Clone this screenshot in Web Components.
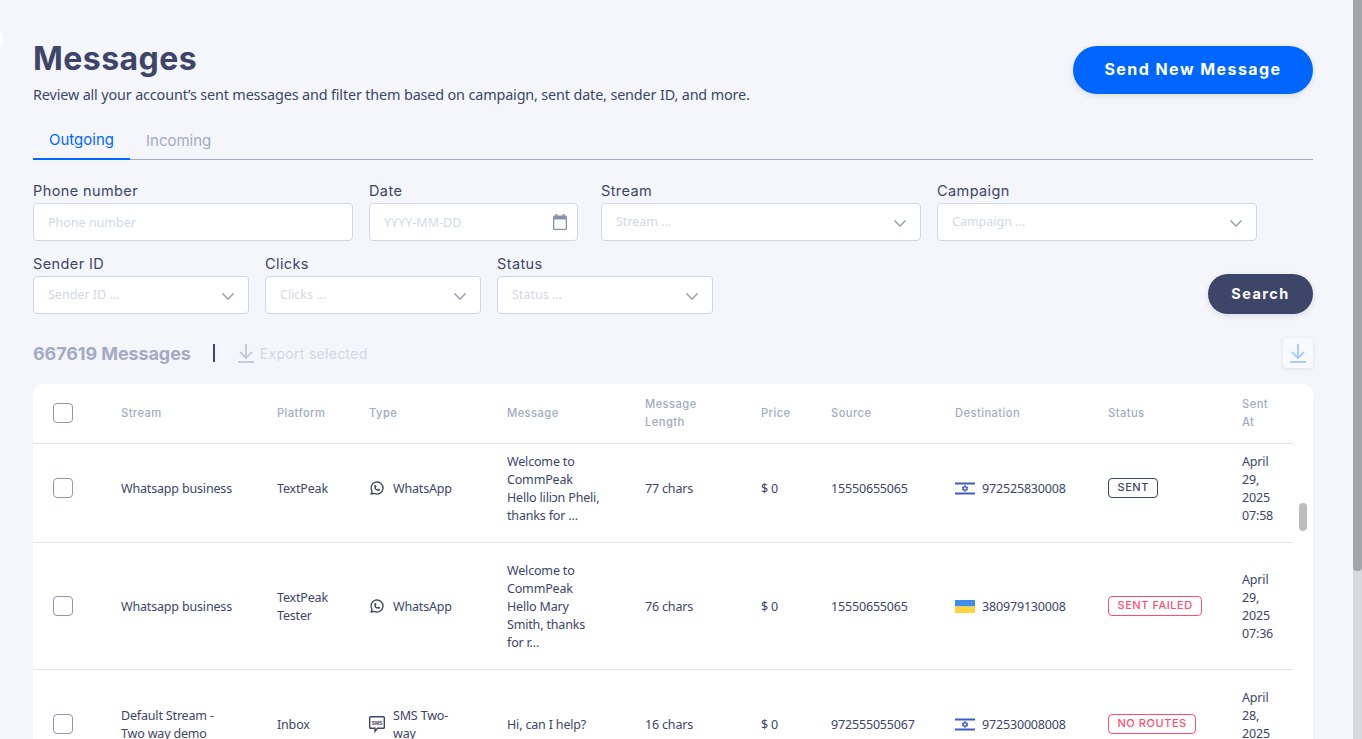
<!DOCTYPE html>
<html lang="en">
<head>
<meta charset="utf-8">
<title>Messages</title>
<style>
  html, body { margin: 0; height: 100%; overflow: hidden; }
  body { background: #f4f6fb; color: #3d4569; font-family: "Noto Sans", sans-serif; }
</style>
</head>
<body>
<messages-page></messages-page>

<script>
const HEAD_FONT = `Inter, "Noto Sans", sans-serif`;
const CHEVRON = `<svg class="chev" width="12" height="7" viewBox="0 0 12 7" fill="none" stroke="#8f97b3" stroke-width="1.3"><path d="M.5.500l5.500 5.500 5.500-5.500"/></svg>`;
const DOWNLOAD = `<svg width="16" height="19" viewBox="0 0 16 19" fill="none" stroke="currentColor" stroke-width="2"><path d="M8 0v13.500M2 8l6 6 6-6M0 18h16"/></svg>`;

class PillButton extends HTMLElement {
  constructor() {
    super();
    this.attachShadow({ mode: 'open' }).innerHTML = `
    <style>
      :host{
        display: inline-flex;
        align-items: center;
        justify-content: center;
        box-sizing: border-box;
        height: var(--h, 48px);
        width: var(--w, 240px);
        padding-bottom: 2px;
        border-radius: 24px;
        background: var(--bg, #0066ff);
        color: #fff;
        font-family: ${HEAD_FONT};
        font-weight: 700;
        font-size: var(--fs, 16px);
        letter-spacing: 1.45px;
        box-shadow: 0 2px 6px rgba(61,69,105,.14);
      }
    </style>
    <slot></slot>`;
  }
}
customElements.define('pill-button', PillButton);

class PageHeader extends HTMLElement {
  constructor() {
    super();
    this.attachShadow({ mode: 'open' }).innerHTML = `
    <style>
      :host{
        display: flex;
        justify-content: space-between;
        height: 120px;
        padding-top: 39px;
        box-sizing: border-box;
      }
      h1{
        margin: 0;
        font-family: ${HEAD_FONT};
        font-weight: 700;
        font-size: 32px;
        line-height: 40px;
        letter-spacing: .45px;
        color: #3d4569;
      }
      p{
        margin: 6px 0 0;
        font-size: 14.4px;
        letter-spacing: -.15px;
        line-height: 20px;
        color: #3d4569;
      }
      .action{ margin-top: 7px; }
    </style>
    <div>
      <h1>Messages</h1>
      <p>Review all your account’s sent messages and filter them based on campaign, sent date, sender ID, and more.</p>
    </div>
    <div class="action"><pill-button>Send New Message</pill-button></div>`;
  }
}
customElements.define('page-header', PageHeader);

class TabBar extends HTMLElement {
  constructor() {
    super();
    this.attachShadow({ mode: 'open' }).innerHTML = `
    <style>
      :host{
        display: flex;
        height: 39px;
        border-bottom: 1px solid #a3abc4;
        font-family: ${HEAD_FONT};
        font-size: 15px;
      }
      div{
        box-sizing: border-box;
        height: 40px;
        line-height: 20px;
      }
      .on{
        width: 97px;
        padding: 10px 0 0 16px;
        color: #0066ff;
        border-bottom: 2px solid #0066ff;
      }
      .off{
        padding: 11px 0 0 16px;
        color: #a3abc4;
      }
    </style>
    <div class="on">Outgoing</div>
    <div class="off">Incoming</div>`;
  }
}
customElements.define('tab-bar', TabBar);

class FilterField extends HTMLElement {
  constructor() {
    super();
    this.shadowDOM = this.attachShadow({ mode: 'open' });
  }

  connectedCallback() {
    const kind = this.getAttribute('kind');
    let icon = '';
    if (kind === 'select') icon = CHEVRON;
    if (kind === 'date') {
      icon = `<svg class="cal" width="14" height="16" viewBox="0 0 14 16"><path d="M2.500 0h2v1.500h5V0h2v1.500h1.200A1.300 1.300 0 0 1 14 2.800v11.900a1.300 1.300 0 0 1-1.300 1.300H1.300A1.300 1.300 0 0 1 0 14.700V2.800a1.300 1.300 0 0 1 1.300-1.300h1.200zM1.300 5.500v9.200h11.400V5.500z" fill="#8a92ad"/></svg>`;
    }
    this.shadowDOM.innerHTML = `
    <style>
      :host{
        display: block;
        width: var(--w, 216px);
        flex: none;
      }
      label{
        display: block;
        height: 22px;
        line-height: 20px;
        font-family: ${HEAD_FONT};
        font-size: 14.5px;
        letter-spacing: .4px;
        color: #3d4569;
      }
      .box{
        display: flex;
        align-items: center;
        justify-content: space-between;
        box-sizing: border-box;
        width: var(--box, 100%);
        height: 38px;
        padding: 0 14px;
        background: #fff;
        border: 1px solid #d3d8e8;
        border-radius: 4px;
        font-size: 12.5px;
        color: #d3d8e8;
      }
      svg{ flex: none; }
      .chev{ margin-top: 3px; }
      .cal{ margin-right: -4px; }
      .select span{ margin-bottom: 2px; }
    </style>
    <label>${this.getAttribute('label')}</label>
    <div class="box ${kind || ''}"><span>${this.getAttribute('hint')}</span>${icon}</div>`;
  }
}
customElements.define('filter-field', FilterField);

class FilterPanel extends HTMLElement {
  constructor() {
    super();
    this.attachShadow({ mode: 'open' }).innerHTML = `
    <style>
      :host{
        display: block;
        padding-top: 21px;
      }
      .row{
        display: flex;
        gap: 16px;
        align-items: flex-end;
      }
      .row + .row{ margin-top: 13px; }
      .push{ margin-left: auto; }
      .wide{ --w: 320px; }
      .date{ --w: 216px; --box: 209px; }
    </style>
    <div class="row">
      <filter-field class="wide" label="Phone number" hint="Phone number"></filter-field>
      <filter-field class="date" label="Date" hint="YYYY-MM-DD" kind="date"></filter-field>
      <filter-field class="wide" label="Stream" hint="Stream ..." kind="select"></filter-field>
      <filter-field class="wide" label="Campaign" hint="Campaign ..." kind="select"></filter-field>
    </div>
    <div class="row">
      <filter-field label="Sender ID" hint="Sender ID ..." kind="select"></filter-field>
      <filter-field label="Clicks" hint="Clicks ..." kind="select"></filter-field>
      <filter-field label="Status" hint="Status ..." kind="select"></filter-field>
      <pill-button class="push" style="--w:105px;--h:40px;--bg:#3d4569;--fs:14.5px">Search</pill-button>
    </div>`;
  }
}
customElements.define('filter-panel', FilterPanel);

class ResultBar extends HTMLElement {
  constructor() {
    super();
    this.attachShadow({ mode: 'open' }).innerHTML = `
    <style>
      :host{
        display: flex;
        align-items: center;
        height: 30px;
        margin-top: 24px;
        font-family: ${HEAD_FONT};
      }
      .count{
        font-weight: 700;
        font-size: 18px;
        letter-spacing: -.1px;
        color: #a3abc4;
      }
      .sep{
        width: 2px;
        height: 18px;
        margin: 0 23px 0 22px;
        background: #3d4569;
      }
      .export{
        display: flex;
        align-items: center;
        gap: 6px;
        font-size: 14px;
        letter-spacing: .3px;
        color: #d3d8e8;
      }
      .export svg{ color: #c5cbdd; }
      .dl{
        margin-left: auto;
        width: 30px;
        height: 30px;
        display: flex;
        align-items: center;
        justify-content: center;
        border-radius: 4px;
        background: #f8f9fd;
        color: #a9ccff;
        box-shadow: 0 1px 4px rgba(61,69,105,.12);
      }
    </style>
    <span class="count">667619 Messages</span>
    <span class="sep"></span>
    <span class="export">${DOWNLOAD}Export selected</span>
    <span class="dl">${DOWNLOAD}</span>`;
  }
}
customElements.define('result-bar', ResultBar);

class StatusBadge extends HTMLElement {
  constructor() {
    super();
    this.attachShadow({ mode: 'open' }).innerHTML = `
    <style>
      :host{
        display: inline-block;
        box-sizing: border-box;
        height: 20px;
        padding: 0 8.500px;
        line-height: 17px;
        border: 1px solid var(--c, #3d4569);
        border-radius: 4px;
        color: var(--c, #3d4569);
        font-family: ${HEAD_FONT};
        font-weight: 500;
        font-size: 11px;
        letter-spacing: .55px;
        white-space: nowrap;
      }
    </style>
    <slot></slot>`;
  }
}
customElements.define('status-badge', StatusBadge);

class CountryFlag extends HTMLElement {
  connectedCallback() {
    const code = this.getAttribute('code');
    const art = code === 'ua'
      ? `<rect width="20" height="6.500" fill="#3d8fe8"/><rect y="6.500" width="20" height="6.500" fill="#ffd43b"/>`
      : `<rect width="20" height="13" fill="#fff"/><rect y=".5" width="20" height="2" fill="#3f5cc4"/><rect y="10.500" width="20" height="2" fill="#3f5cc4"/>
         <path d="M10 3.300l2.700 4.600H7.300zM10 9.700L7.300 5.100h5.400z" fill="none" stroke="#3f5cc4"/>`;
    this.attachShadow({ mode: 'open' }).innerHTML = `
    <style>
      :host{ display: inline-flex; flex: none; width: 20px; height: 13px; }
    </style>
    <svg width="20" height="13" viewBox="0 0 20 13">${art}</svg>`;
  }
}
customElements.define('country-flag', CountryFlag);

const COLS = '68px 156px 92px 138px 138px 116px 70px 124px 153px 134px 71px';

class MessageHead extends HTMLElement {
  constructor() {
    super();
    const titles = ['Stream', 'Platform', 'Type', 'Message', 'Message Length', 'Price', 'Source', 'Destination', 'Status', 'Sent At'];
    this.attachShadow({ mode: 'open' }).innerHTML = `
    <style>
      :host{
        display: grid;
        grid-template-columns: ${COLS};
        align-items: center;
        height: 60px;
        padding-bottom: 2px;
        box-sizing: border-box;
        border-bottom: 1px solid #dfe2ee;
        font-family: ${HEAD_FONT};
        font-weight: 500;
        font-size: 11.2px;
        letter-spacing: .42px;
        line-height: 18px;
        color: #a3abc4;
      }
      div{ padding: 1px 20px 0; }
      .check{ padding-top: 0; }
      i{
        display: block;
        width: 20px;
        height: 20px;
        box-sizing: border-box;
        border: 1px solid #8f97b3;
        border-radius: 4px;
      }
    </style>
    <div class="check"><i></i></div>
    ${titles.map(t => `<div>${t}</div>`).join('')}`;
  }
}
customElements.define('message-head', MessageHead);

const TYPE_ICONS = {
  whatsapp: `<svg width="16" height="16" viewBox="0 0 24 24" fill="none" stroke="#3d4569" stroke-width="2" stroke-linecap="round" stroke-linejoin="round"><path d="M3 21l1.650-3.800a9 9 0 1 1 3.400 2.900L3 21"/><path d="M9 10a.5.5 0 0 0 1 0V9a.5.5 0 0 0-1 0v1a5 5 0 0 0 5 5h1a.5.5 0 0 0 0-1h-1a.5.5 0 0 0 0 1"/></svg>`,
  sms: `<svg width="16" height="17" viewBox="0 0 16 17"><path d="M1.500.700h13a.8.8 0 0 1 .8.8v10a.8.8 0 0 1-.8.8H8.500l-2.500 3v-3H1.500a.8.8 0 0 1-.8-.8v-10a.8.8 0 0 1 .8-.8z" fill="none" stroke="#3d4569" stroke-width="1.400"/><text x="8" y="8.500" text-anchor="middle" font-family="Liberation Sans" font-weight="700" font-size="5" fill="#3d4569">SMS</text></svg>`
};

class MessageRow extends HTMLElement {
  constructor() {
    super();
    this.shadowDOM = this.attachShadow({ mode: 'open' });
  }

  set message(m) {
    this._message = m;
    this.render();
  }

  render() {
    const m = this._message;
    this.shadowDOM.innerHTML = `
    <style>
      :host{
        display: grid;
        grid-template-columns: ${COLS};
        align-items: center;
        padding: var(--pad, 17px) 0 17px;
        border-bottom: 1px solid #e6e6e9;
        font-size: 12.5px;
        letter-spacing: -.17px;
        line-height: 18px;
        color: #3d4569;
      }
      div{ padding: 2px 20px 0; min-width: 0; }
      .check, .status{ padding-top: 0; }
      i{
        display: block;
        width: 20px;
        height: 20px;
        box-sizing: border-box;
        border: 1px solid #8f97b3;
        border-radius: 4px;
      }
      .type{ display: flex; align-items: center; gap: 8px; }
      .type svg{ flex: none; margin-bottom: 2px; }
      .dest{ display: flex; align-items: center; gap: 7px; padding-right: 0; white-space: nowrap; }
      .dest country-flag{ margin-bottom: 2px; }
      .status, .src{ padding-right: 0; }
      .status status-badge{ vertical-align: middle; }
      .plat{ padding-right: 10px; }
      .text{ padding-right: 23px; }
    </style>
    <div class="check"><i></i></div>
    <div>${m.stream}</div>
    <div class="plat">${m.platform}</div>
    <div class="type">${TYPE_ICONS[m.icon]}<span>${m.type}</span></div>
    <div class="text">${m.text}</div>
    <div>${m.length}</div>
    <div>${m.price}</div>
    <div class="src">${m.source}</div>
    <div class="dest"><country-flag code="${m.flag}"></country-flag>${m.destination}</div>
    <div class="status"><status-badge style="--c:${m.failed ? '#ff4d6d' : '#3d4569'}">${m.status}</status-badge></div>
    <div>${m.sent}</div>`;
  }
}
customElements.define('message-row', MessageRow);

class MessageTable extends HTMLElement {
  constructor() {
    super();
    this.attachShadow({ mode: 'open' }).innerHTML = `
    <style>
      :host{
        display: block;
        position: relative;
        margin-top: 16px;
        padding-right: 20px;
        background: #fff;
        border-radius: 10px 10px 0 0;
      }
      .thumb{
        position: absolute;
        left: 1266px;
        top: 119px;
        width: 8px;
        height: 28px;
        border-radius: 4px;
        background: #bdbdbd;
      }
    </style>
    <message-head></message-head>
    <div id="rows"></div>
    <div class="thumb"></div>`;

    const rows = [
      { stream: 'Whatsapp business', platform: 'TextPeak', icon: 'whatsapp', type: 'WhatsApp', text: 'Welcome to CommPeak Hello liliɔn Pheli, thanks for ...', length: '77 chars', price: '$ 0', source: '15550655065', flag: 'il', destination: '972525830008', status: 'SENT', sent: 'April 29, 2025 07:58' },
      { stream: 'Whatsapp business', platform: 'TextPeak Tester', icon: 'whatsapp', type: 'WhatsApp', text: 'Welcome to CommPeak Hello Mary Smith, thanks for r...', length: '76 chars', price: '$ 0', source: '15550655065', flag: 'ua', destination: '380979130008', status: 'SENT FAILED', failed: true, sent: 'April 29, 2025 07:36' },
      { stream: 'Default Stream - Two way demo', platform: 'Inbox', icon: 'sms', type: 'SMS Two-way', text: 'Hi, can I help?', length: '16 chars', price: '$ 0', source: '972555055067', flag: 'il', destination: '972530008008', status: 'NO ROUTES', failed: true, sent: 'April 28, 2025 12:10' }
    ];
    const holder = this.shadowRoot.getElementById('rows');
    rows.forEach((m, i) => {
      const row = document.createElement('message-row');
      // first row sits scrolled under the table head
      if (i === 0) row.style.setProperty('--pad', '7px');
      row.message = m;
      holder.appendChild(row);
    });
  }
}
customElements.define('message-table', MessageTable);

class MessagesPage extends HTMLElement {
  constructor() {
    super();
    this.attachShadow({ mode: 'open' }).innerHTML = `
    <style>
      :host{
        display: flex;
        position: relative;
        height: 739px;
        overflow: hidden;
      }
      main{
        flex: 1;
        min-width: 0;
        padding: 0 40px 0 33px;
      }
      .bar{
        flex: none;
        width: 9px;
        background: #d8d9dc;
      }
      .bar b{
        display: block;
        height: 571px;
        background: #a4a5a8;
        border-radius: 0 0 4px 4px;
      }
      .nub{
        position: absolute;
        left: -27px;
        top: 24px;
        width: 30px;
        height: 30px;
        border-radius: 50%;
        background: #fff;
      }
    </style>
    <main>
      <page-header></page-header>
      <tab-bar></tab-bar>
      <filter-panel></filter-panel>
      <result-bar></result-bar>
      <message-table></message-table>
    </main>
    <div class="bar"><b></b></div>
    <div class="nub"></div>`;
  }
}
customElements.define('messages-page', MessagesPage);
</script>
</body>
</html>
